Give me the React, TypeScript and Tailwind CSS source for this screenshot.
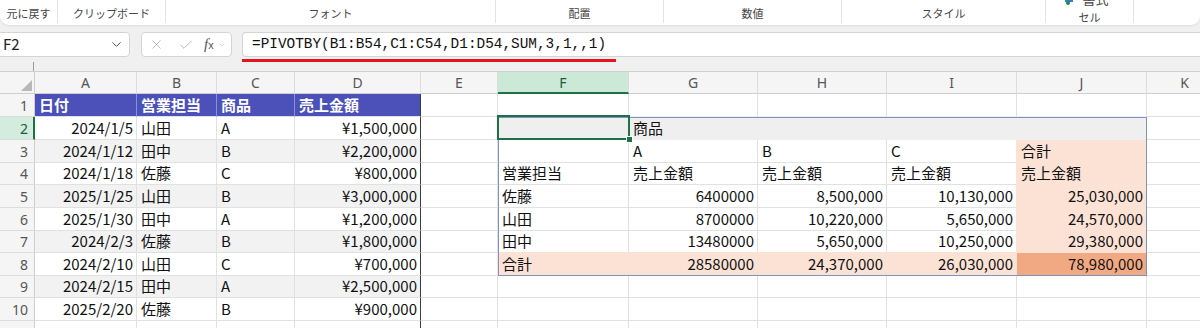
import { Check, ChevronDown, X } from "lucide-react";

type Fill = "none" | "band" | "blue" | "gray" | "peach" | "orange";

interface Cell {
  text: string;
  right?: boolean;
  fill: Fill;
}

const bgClass: Record<Fill, string> = {
  none: "bg-white",
  band: "bg-[#f2f2f2]",
  blue: "bg-[#4b51b8]",
  gray: "bg-[#efefef]",
  peach: "bg-[#fbe2d5]",
  orange: "bg-[#f1a983]",
};

const rightLine: Record<Fill, string> = {
  none: "border-r-[#e1e1e1]",
  band: "border-r-[#e1e1e1]",
  blue: "border-r-[#8a8ed2]",
  gray: "border-r-[#efefef]",
  peach: "border-r-[#fbe2d5]",
  orange: "border-r-[#f1a983]",
};

const bottomLine: Record<Fill, string> = {
  none: "border-b-[#e1e1e1]",
  band: "border-b-[#e1e1e1]",
  blue: "border-b-[#e1e1e1]",
  gray: "border-b-[#efefef]",
  peach: "border-b-[#fbe2d5]",
  orange: "border-b-[#f1a983]",
};

const hides = (f: Fill) => f === "gray" || f === "peach" || f === "orange";

const sales = [
  ["2024/1/5", "山田", "A", "¥1,500,000"],
  ["2024/1/12", "田中", "B", "¥2,200,000"],
  ["2024/1/18", "佐藤", "C", "¥800,000"],
  ["2025/1/25", "山田", "B", "¥3,000,000"],
  ["2025/1/30", "田中", "A", "¥1,200,000"],
  ["2024/2/3", "佐藤", "B", "¥1,800,000"],
  ["2024/2/10", "山田", "C", "¥700,000"],
  ["2024/2/15", "田中", "A", "¥2,500,000"],
  ["2025/2/20", "佐藤", "B", "¥900,000"],
];

const pivot = [
  ["", "商品", "", "", ""],
  ["", "A", "B", "C", "合計"],
  ["営業担当", "売上金額", "売上金額", "売上金額", "売上金額"],
  ["佐藤", "6400000", "8,500,000", "10,130,000", "25,030,000"],
  ["山田", "8700000", "10,220,000", "5,650,000", "24,570,000"],
  ["田中", "13480000", "5,650,000", "10,250,000", "29,380,000"],
  ["合計", "28580000", "24,370,000", "26,030,000", "78,980,000"],
];

const letters = ["A", "B", "C", "D", "E", "F", "G", "H", "I", "J", "K"];

function buildCells(): Cell[][] {
  const cells: Cell[][] = [];
  for (let r = 0; r < 11; r++) {
    const row: Cell[] = [];
    for (let c = 0; c < 11; c++) row.push({ text: "", fill: "none" });
    cells.push(row);
  }
  ["日付", "営業担当", "商品", "売上金額"].forEach((t, c) => {
    cells[0][c] = { text: t, fill: "blue" };
  });
  sales.forEach((s, i) => {
    const r = i + 1;
    const fill: Fill = r % 2 === 0 ? "band" : "none";
    cells[r][0] = { text: s[0], right: true, fill };
    cells[r][1] = { text: s[1], fill };
    cells[r][2] = { text: s[2], fill };
    cells[r][3] = { text: s[3], right: true, fill };
  });
  pivot.forEach((p, i) => {
    const r = i + 1;
    p.forEach((t, j) => {
      const c = j + 5;
      let fill: Fill = "none";
      if (r === 1) fill = "gray";
      else if (c === 9 && r < 7) fill = "peach";
      else if (r === 7) fill = c === 9 ? "orange" : "peach";
      cells[r][c] = { text: t, right: i >= 3 && j > 0, fill };
    });
  });
  return cells;
}

const cells = buildCells();

const groups = [
  { label: "元に戻す", w: "w-[58px]" },
  { label: "クリップボード", w: "w-[108px]" },
  { label: "フォント", w: "w-[330px]" },
  { label: "配置", w: "w-[168px]" },
  { label: "数値", w: "w-[178px]" },
  { label: "スタイル", w: "w-[204px]" },
];

const Ribbon = () => (
  <div className="flex h-[25px] bg-white rounded-b-[9px] shadow-[0_1px_2px_rgba(0,0,0,0.08)] overflow-hidden">
    {groups.map((g) => (
      <div
        key={g.label}
        className={`${g.w} h-[23px] border-r border-[#e3e3e3] flex items-end justify-center pb-[2px] text-[11px] text-[#444]`}
      >
        {g.label}
      </div>
    ))}
    <div className="w-[88px] h-[23px] border-r border-[#e3e3e3] flex flex-col items-center text-[11px] text-[#444]">
      <div className="flex items-center gap-[6px] -mt-[8px] ml-[-6px] h-[13px]">
        <svg width="12" height="12" viewBox="0 0 12 12">
          <rect x="1" y="1" width="8" height="8" fill="#3a7bd5" />
          <circle cx="4" cy="10" r="2" fill="#1e8c4e" />
        </svg>
        <span className="text-[13px] leading-none">書式</span>
      </div>
      <span className="mt-[7px] leading-none">セル</span>
    </div>
  </div>
);

const FormulaBar = () => (
  <div className="flex items-start mt-[7px] h-[30px]">
    <div className="w-[134px] ml-[-4px] h-[25px] bg-white border border-[#d4d4d4] rounded-[4px] flex items-center justify-between pl-[6px] pr-[5px] text-[15px] text-[#222]">
      <span>F2</span>
      <ChevronDown size={15} strokeWidth={1.5} className="text-[#444]" />
    </div>
    <div className="ml-[11px] w-[91px] h-[25px] bg-white border border-[#d4d4d4] rounded-[4px] flex items-center pl-[7px] text-[#a6a6a6]">
      <X size={15} strokeWidth={1.2} />
      <Check size={16} strokeWidth={1.2} className="ml-[14px]" />
      <span className="ml-[10px] font-['Liberation_Serif',serif] italic text-[15px] text-[#555] leading-none">
        f<span className="text-[11px] not-italic font-['Liberation_Sans',sans-serif]">x</span>
      </span>
      <ChevronDown size={8} strokeWidth={1.5} className="ml-[4px] text-[#aaa]" />
    </div>
    <div className="ml-[10px] flex-1 flex flex-col">
      <div className="h-[25px] bg-white border border-r-0 border-[#d4d4d4] rounded-l-[4px] flex items-center pl-[9px] font-['Liberation_Mono',monospace] text-[14.4px] text-[#111]">
        =PIVOTBY(B1:B54,C1:C54,D1:D54,SUM,3,1,,1)
      </div>
      <div className="mt-[2px] w-[374px] h-[3px] bg-[#e3151a]" />
    </div>
  </div>
);

const Sheet = () => (
  <div className="relative grid grid-cols-[35px_102px_80px_78px_126px_77px_131px_129px_129px_130px_130px_76px] grid-rows-[23px_23px_23px_23px_22px_23px_23px_22px_23px_22px_23px_23px] font-['Noto_Sans_CJK_JP','Noto_Sans',sans-serif]">
    <div className="bg-[#f5f5f5] border-r border-b border-t border-[#cfcfcf] flex items-end justify-end p-[2px]">
      <svg width="11" height="11" viewBox="0 0 11 11">
        <polygon points="11,0 11,11 0,11" fill="#b8b8b8" />
      </svg>
    </div>
    {letters.map((l) =>
      l === "F" ? (
        <div
          key={l}
          className="bg-[#cce8d6] border-t border-t-[#cfcfcf] border-r border-r-[#dcdcdc] border-b-2 border-b-[#1e7145] flex items-center justify-center font-['Noto_Sans',sans-serif] text-[14px] text-[#1a5e38]"
        >
          {l}
        </div>
      ) : (
        <div
          key={l}
          className="bg-[#f5f5f5] border-t border-t-[#cfcfcf] border-r border-r-[#dcdcdc] border-b border-b-[#cfcfcf] flex items-center justify-center font-['Noto_Sans',sans-serif] text-[14px] text-[#555]"
        >
          {l}
        </div>
      )
    )}
    {cells.map((row, r) => [
      r === 1 ? (
        <div
          key={`h${r}`}
          className="bg-[#d3ecdd] border-r-2 border-r-[#1e7145] border-b border-b-[#dcdcdc] flex items-center justify-end pr-[5px] font-['Noto_Sans',sans-serif] text-[14px] text-[#1a5e38]"
        >
          {r + 1}
        </div>
      ) : (
        <div
          key={`h${r}`}
          className="bg-[#f5f5f5] border-r border-r-[#cfcfcf] border-b border-b-[#dcdcdc] flex items-center justify-end pr-[6px] font-['Noto_Sans',sans-serif] text-[14px] text-[#555]"
        >
          {r < 10 ? r + 1 : ""}
        </div>
      ),
      ...row.map((cell, c) => {
        const rightN = row[c + 1]?.fill ?? "none";
        const belowN = cells[r + 1]?.[c]?.fill ?? "none";
        const rc =
          c === 3
            ? "border-r-[#3c3c3c]"
            : hides(cell.fill)
              ? rightLine[cell.fill]
              : hides(rightN)
                ? rightLine[rightN]
                : rightLine[cell.fill];
        const bc = hides(cell.fill)
          ? bottomLine[cell.fill]
          : hides(belowN)
            ? bottomLine[belowN]
            : bottomLine[cell.fill];
        return (
          <div
            key={`${r}-${c}`}
            className={`flex items-center overflow-hidden whitespace-nowrap border-r border-b text-[15px] ${bgClass[cell.fill]} ${rc} ${bc} ${
              cell.right ? "justify-end pr-[3px]" : "justify-start pl-[4px]"
            } ${cell.fill === "blue" ? "text-white font-bold" : "text-[#111]"}`}
          >
            {cell.text}
          </div>
        );
      }),
    ])}
    <div className="absolute left-[498px] top-[46px] w-[649px] h-[159px] border border-[#7f92c6] pointer-events-none" />
    <div className="absolute left-[497px] top-[44px] w-[133px] h-[25px] border-2 border-[#1e7145] pointer-events-none" />
    <div className="absolute left-[626px] top-[65px] w-[7px] h-[7px] bg-[#1e7145] border border-white pointer-events-none" />
  </div>
);

export default function App() {
  return (
    <div className="w-[1200px] h-[328px] overflow-hidden bg-[#f0f0f0] font-['Noto_Sans_CJK_JP','Noto_Sans',sans-serif]">
      <Ribbon />
      <FormulaBar />
      <div className="h-[9px] ml-[33px] w-[1px] bg-[#9a9a9a]" />
      <Sheet />
    </div>
  );
}
